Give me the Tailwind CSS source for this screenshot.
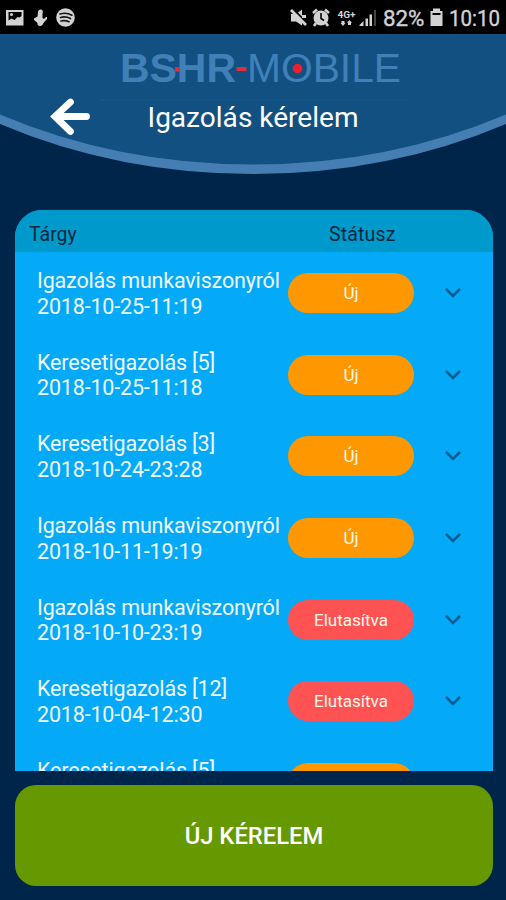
<!DOCTYPE html>
<html lang="hu">
<head>
<meta charset="utf-8">
<title>BSHR-MOBILE</title>
<script src="https://cdn.jsdelivr.net/npm/@tailwindcss/browser@4"></script>
</head>
<body class="bg-[#00254a]">
<div class="w-[506px] h-[900px] flex flex-col overflow-hidden bg-[#00254a] font-[Roboto,sans-serif]">

  <!-- Status bar -->
  <div class="h-[34px] shrink-0 bg-black flex items-center">
    <svg width="506" height="34" viewBox="0 0 506 34" fill="#d2d2d2" font-family="Roboto, sans-serif">
      <path fill-rule="evenodd" d="M6 10h17.500v15.500H6zM8.500 12v8.500l3-2 3 1.500 3-3 2 .5 2-1.500v-4z"/><circle cx="11.500" cy="14.500" r="1.500"/>
      <path d="M38 11.500q1-2.500 3.500-2 2 1 1 4l0 4.500 1.500 1 2-2h1v2l-3.500 4q-1 3.500-3.500 3-3-.5-2.500-3l-3.500-3 0-1.500 3.500-2z"/>
      <circle cx="65.500" cy="17.500" r="9.300"/>
      <path d="M60 14q6-2 12 1.200M60.500 17.500q5-1.500 10 1M61 21q4-1 8 .7" fill="none" stroke="#151515" stroke-width="1.700" stroke-linecap="round"/>
      <path d="M291 14h5l6-4.500v16l-6-4h-5z"/>
      <path d="M292 8l15 15" stroke="#000" stroke-width="2"/><path d="M291 10l15 15M302 16.500h4" stroke="#d2d2d2" stroke-width="2.800"/>
      <circle cx="321" cy="18" r="7.500"/><path d="M313 13l4-3.500M329 13l-4-3.500M316 23l-2 3M326 23l2 3" stroke="#d2d2d2" stroke-width="2.600"/>
      <path d="M321 13v5.500l3 2" stroke="#000" stroke-width="1.600" fill="none"/>
      <text x="337.500" y="17.500" font-size="9.500" font-weight="700" textLength="18" lengthAdjust="spacingAndGlyphs">4G+</text>
      <path d="M341.500 21h3v2h1l-2.500 3-2.500-3h1zM348 25v-2.200h-1l2.500-2.800 2.500 2.800h-1v2.200z"/>
      <path d="M359.500 26v-1l4-4v5zM365.500 18.500h2.500v7.500h-2.500zM369.500 14.500h2.500v11.500h-2.500z"/><path fill="#444" d="M374 10h2v16h-2z"/>
      <g stroke="#d2d2d2" stroke-width=".4">
      <text x="383" y="25.500" font-size="21.500" textLength="41.500" lengthAdjust="spacingAndGlyphs">82%</text>
      <text x="449" y="25.500" font-size="21.500" textLength="51" lengthAdjust="spacingAndGlyphs">10:10</text>
      </g>
      <path fill-rule="evenodd" d="M433 8.500h7v2.500h2.500v15h-12v-15h2.500zM432.500 13v2h8v-2z"/>
    </svg>
  </div>

  <!-- Header with curved lower edge -->
  <div class="h-[176px] shrink-0">
    <svg width="506" height="176" viewBox="0 34 506 176">
      <path fill="#457eb3" d="M0 34H506V124Q388 174 253 174Q118 174 0 124z"/>
      <path fill="#125082" d="M0 34H506V114.500Q388 164.500 253 164.500Q118 164.500 0 114.500z"/>
      <path d="M100 100H408" stroke="#1b5a8c" stroke-width="1"/>
      <g fill="#4080b7" font-family="Liberation Sans, Arial, sans-serif" font-size="40">
        <text x="120" y="82" font-weight="700" textLength="116" lengthAdjust="spacingAndGlyphs">BSHR</text>
        <text x="247" y="82" textLength="154" lengthAdjust="spacingAndGlyphs">MOBILE</text>
      </g>
      <path fill="#e32b3c" d="M175 67h4.500v4.500h-4.500zM236.500 67h10v4h-10z"/><circle cx="297.500" cy="68.500" r="4.800" fill="#ed202b"/>
      <path d="M86.500 116.500H57M70.500 102L55 116.500 70.500 131.500" fill="none" stroke="#fff" stroke-width="6.800" stroke-linecap="round" stroke-linejoin="miter"/>
      <text x="147.500" y="127" fill="#fff" font-family="Roboto, sans-serif" font-size="28" textLength="211" lengthAdjust="spacingAndGlyphs">Igazolás kérelem</text>
    </svg>
  </div>

  <!-- Request list -->
  <div class="mx-[15px] w-[478px] h-[561px] shrink-0 rounded-t-[27px] overflow-hidden bg-[#04a9f7]">
    <div class="h-[42px] bg-[#0099cc] flex items-center text-[19.5px] leading-[24px] text-[#062a3b] pt-[8px]">
      <span class="ml-[14px] w-[300px]">Tárgy</span><span class="tracking-[0.15px]">Státusz</span>
    </div>
    <div id="rows" class="pt-[0.5px]"></div>
  </div>

  <button class="mx-[15px] mt-[14px] pt-[2px] w-[478px] h-[101px] shrink-0 rounded-[21px] bg-[#669900] text-white text-[23.8px] font-medium text-center">ÚJ KÉRELEM</button>
</div>

<script>
  const items = [
    ['Igazolás munkaviszonyról', '2018-10-25-11:19', 0],
    ['Keresetigazolás [5]', '2018-10-25-11:18', 0],
    ['Keresetigazolás [3]', '2018-10-24-23:28', 0],
    ['Igazolás munkaviszonyról', '2018-10-11-19:19', 0],
    ['Igazolás munkaviszonyról', '2018-10-10-23:19', 1],
    ['Keresetigazolás [12]', '2018-10-04-12:30', 1],
    ['Keresetigazolás [5]', '2018-10-04-12:28', 0]
  ];
  document.getElementById('rows').innerHTML = items.map(([title, date, rejected]) => `
    <div class="h-[81.6px] flex items-center pl-[22px]">
      <div class="w-[251px] pt-[1px] whitespace-nowrap text-[21.5px] leading-[25.5px] text-[#effaff] tracking-[-0.17px]"><div>${title}</div><div>${date}</div></div>
      <div class="w-[126px] h-[40px] rounded-full text-center text-[17px] leading-[40px] text-[#fff8ec] ${rejected ? 'bg-[#ff5252]' : 'bg-[#ff9800]'}">${rejected ? 'Elutasítva' : 'Új'}</div>
      <svg class="ml-[30px]" width="18" height="12" viewBox="0 0 18 12"><path d="M2 2l7 7 7-7" fill="none" stroke="#075d91" stroke-width="2.500"/></svg>
    </div>`).join('');
</script>
</body>
</html>
